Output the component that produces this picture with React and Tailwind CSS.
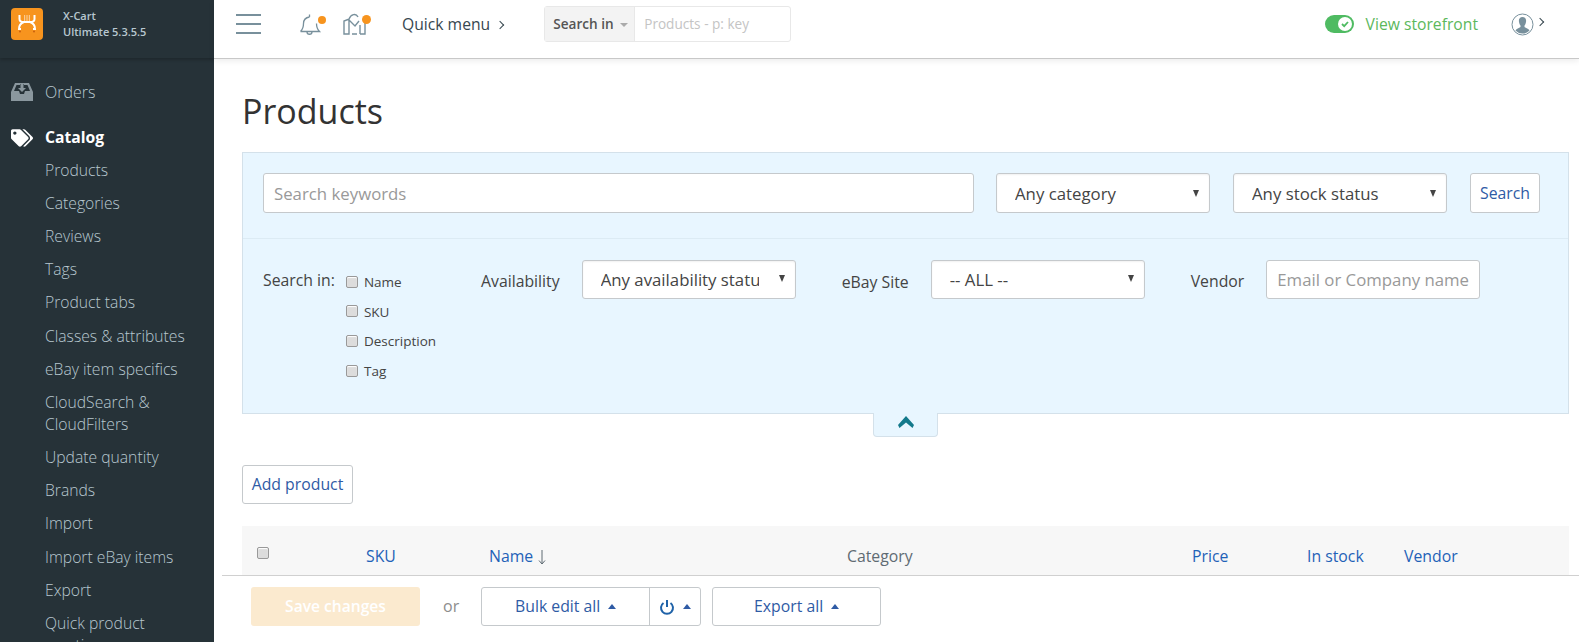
import React from 'react'
import { FaTags } from 'react-icons/fa'

const font = 'font-["Open_Sans",sans-serif]'

const menuItems = [
  'Products',
  'Categories',
  'Reviews',
  'Tags',
  'Product tabs',
  'Classes & attributes',
  'eBay item specifics',
  'CloudSearch & CloudFilters',
  'Update quantity',
  'Brands',
  'Import',
  'Import eBay items',
  'Export',
  'Quick product creation',
]

const Logo = () => (
  <div className="w-8 h-8 rounded-[4px] bg-[#f7941e] flex items-center justify-center shrink-0">
    <svg width="20" height="20" viewBox="0 0 20 20" fill="none">
      <path d="M2.500 1v4c0 2 2 3 4 3h7c2 0 4-1 4-3V1" stroke="#fff" strokeWidth="2" />
      <path d="M7 8c-3 1-5 3-5 7h2M13 8c3 1 5 3 5 7h-2" stroke="#fff" strokeWidth="2" />
      <path d="M7 2h6M7 4h6M7 6h6" stroke="#fff" strokeWidth="1.200" strokeDasharray="1.200 1.200" />
      <circle cx="3" cy="17.500" r="1" fill="#c9600f" />
      <circle cx="17" cy="17.500" r="1" fill="#c9600f" />
    </svg>
  </div>
)

const InboxIcon = () => (
  <svg width="22" height="18" viewBox="0 0 22 18" fill="#8a979e">
    <path d="M4 0h14l4 9v9H0V9zM5.500 2 3 8h5l1 3h4l1-3h5l-2.500-6h-3.500V1H9v1z" fillRule="evenodd" />
    <path d="M9.500 1h3v4h2.500L11 9 7 5h2.500z" />
  </svg>
)

const Sidebar = () => (
  <aside className="w-[214px] shrink-0 h-full bg-[#263238] overflow-hidden">
    <div className="h-[58px] flex items-center pl-[11px] pb-[10px] shadow-[0_2px_3px_rgba(0,0,0,0.2)]">
      <Logo />
      <div className="ml-[20px] text-[11px] leading-[16px] font-semibold text-[#b8c8d0]">
        <div>X-Cart</div>
        <div>Ultimate 5.3.5.5</div>
      </div>
    </div>
    <div className="pt-[22px]">
      <div className="flex items-center h-[24px] text-[16px] font-light text-[#b8c8d0]">
        <div className="w-[45px] pl-[11px]"><InboxIcon /></div>
        Orders
      </div>
      <div className="mt-[22px] flex items-center h-[24px] text-[15.700px] font-bold text-white">
        <div className="w-[45px] pl-[11px]"><FaTags size={22} /></div>
        Catalog
      </div>
      <ul className="mt-[3px] pl-[45px] pr-[20px]">
        {menuItems.map((item) => (
          <li key={item} className="py-[5.600px] text-[15.700px] leading-[22px] text-[#b8c8d0] font-light">{item}</li>
        ))}
      </ul>
    </div>
  </aside>
)

const BellIcon = () => (
  <div className="relative w-[26px] h-[24px]">
    <svg width="24" height="24" viewBox="0 0 24 24" fill="none" stroke="#78909c" strokeWidth="1.300">
      <path d="M1.500 19.500h19c-2-2-3-4.500-3-8M4.500 11.500c0 3-1 6-3 8M4.500 11.500c0-4 3-6 6-6.500M10.500 5V2.500M8 20c0 3 5 3 5 0" />
    </svg>
    <div className="absolute top-[4px] right-[-1px] w-2 h-2 rounded-full bg-[#f7941e]" />
  </div>
)

const StoreIcon = () => (
  <div className="relative w-[28px] h-[24px]">
    <svg width="24" height="24" viewBox="0 0 24 24" fill="none" stroke="#78909c" strokeWidth="1.400">
      <path d="M1 22V9l5-2v15zM6 8l6 6 4-5M6 7c2-5 7-6 9-2M9 22h5M17 22h5V10M17 22v-9" />
    </svg>
    <div className="absolute top-[3px] right-0 w-[9px] h-[9px] rounded-full bg-[#f7941e]" />
  </div>
)

const Header = () => (
  <header className="h-[59px] shrink-0 flex items-center pb-[10px] border-b border-[#c8c8c8] bg-white shadow-[0_2px_6px_rgba(0,0,0,0.08)] z-10">
    <div className="ml-[22px] w-[25px] flex flex-col gap-[7px]">
      <div className="h-[2px] bg-[#78909c]" />
      <div className="h-[2px] bg-[#78909c]" />
      <div className="h-[2px] bg-[#78909c]" />
    </div>
    <div className="ml-[38px]"><BellIcon /></div>
    <div className="ml-[18px]"><StoreIcon /></div>
    <div className="ml-[31px] mt-[2px] flex items-center text-[15.700px] text-[#37474f]">
      Quick menu
      <span className="ml-[7px] w-[6px] h-[6px] border-t border-r border-[#37474f] rotate-45" />
    </div>
    <div className="ml-[41px] flex h-[36px] w-[247px] border border-[#e8e8e8] rounded-[3px] text-[13.600px]">
      <div className="w-[90px] bg-[#f3f3f3] border-r border-[#e8e8e8] flex items-center pl-[8px] pt-[1px] font-semibold text-[#555]">
        Search in
        <span className="ml-[6px] border-x-[4px] border-x-transparent border-t-[4px] border-t-[#aaa]" />
      </div>
      <div className="flex-1 flex items-center pl-[9px] pt-[1px] text-[#c4c4c4]">Products - p: key</div>
    </div>
    <div className="ml-auto flex items-center text-[15.700px] text-[#5cb85c]">
      <div className="w-[29px] h-[18px] rounded-full bg-[#4fbb62] flex items-center justify-end pr-[2px]">
        <div className="w-[14px] h-[14px] rounded-full bg-white flex items-center justify-center">
          <svg width="10" height="10" viewBox="0 0 10 10" fill="none" stroke="#4fbb62" strokeWidth="1.800">
            <path d="M2 5l2.200 2.200L8 3" />
          </svg>
        </div>
      </div>
      <span className="ml-[12px] mt-[2px]">View storefront</span>
    </div>
    <div className="ml-[33px] mr-[36px] flex items-center">
      <svg width="23" height="23" viewBox="0 0 23 23">
        <circle cx="11.500" cy="11.500" r="10.500" fill="#fff" stroke="#78909c" strokeWidth="1" />
        <path d="M11.500 4c-3 0-4 2.500-3.500 5 .2 1.500 1 3 1.500 3.500v1.500c-1.500 1-4 1.500-5 3.500a9.500 9.500 0 0 0 14 0c-1-2-3.500-2.500-5-3.500v-1.500c.5-.5 1.300-2 1.500-3.500.5-2.500-.5-5-3.500-5z" fill="#78909c" />
      </svg>
      <span className="ml-[3px] mb-[4px] w-[6px] h-[6px] border-t border-r border-[#37474f] rotate-45" />
    </div>
  </header>
)

const Select = ({ label, className }) => (
  <div className={`w-[214px] shrink-0 bg-white border border-[#c5c9cc] rounded-[3px] flex items-center justify-between pl-[18px] pr-[8px] text-[16.800px] text-[#444] shadow-[inset_0_1px_2px_rgba(0,0,0,0.06)] ${className}`}>
    <span className="whitespace-nowrap overflow-hidden w-[158px]">{label}</span>
    <span className="border-x-[3.500px] border-x-transparent border-t-[7px] border-t-[#444] mb-[2px] mr-[2px]" />
  </div>
)

const Checkbox = ({ className }) => (
  <span className={`block w-[12px] h-[12px] rounded-[2px] bg-[#dcdcdc] border border-[#999] shadow-[inset_0_1px_1px_#fff] ${className || ''}`} />
)

const SearchPanel = () => (
  <div className="bg-[#e8f6ff] border border-[#d4e1ea] h-[262px] text-[#444]">
    <div className="h-[86px] border-b border-[#dcebf4] pl-[20px] pt-[20px] flex">
      <div className="w-[711px] h-[40px] pt-[2px] bg-white border border-[#c5c9cc] rounded-[3px] flex items-center pl-[10px] text-[16.800px] text-[#999]">Search keywords</div>
      <Select label="Any category" className="h-[40px] pt-[2px] ml-[22px]" />
      <Select label="Any stock status" className="h-[40px] pt-[2px] ml-[23px]" />
      <div className="ml-[23px] w-[70px] h-[40px] pt-[2px] bg-white border border-[#c5c9cc] rounded-[3px] flex items-center justify-center text-[15.800px] text-[#2f5ba5]">Search</div>
    </div>
    <div className="pl-[20px] pt-[21px] flex items-start">
      <span className="text-[15.800px] leading-[39px] mt-[1px] mr-[11px]">Search in:</span>
      <div className="text-[13.500px] mt-[7px]">
        {['Name', 'SKU', 'Description', 'Tag'].map((label) => (
          <div key={label} className="h-[29.600px] flex items-center">
            <Checkbox />
            <span className="ml-[6px] mt-[1px]">{label}</span>
          </div>
        ))}
      </div>
      <span className="ml-[45px] text-[15.800px] leading-[39px] mt-[2px]">Availability</span>
      <Select label="Any availability status" className="h-[39px] ml-[22px]" />
      <span className="ml-[46px] text-[15.800px] leading-[39px] mt-[3px]">eBay Site</span>
      <Select label="-- ALL --" className="h-[39px] ml-[22px]" />
      <span className="ml-[46px] text-[15.800px] leading-[39px] mt-[2px]">Vendor</span>
      <div className="ml-[22px] w-[214px] h-[39px] bg-white border border-[#c5c9cc] rounded-[3px] flex items-center pl-[10px] text-[16.800px] text-[#999] whitespace-nowrap overflow-hidden">Email or Company name</div>
    </div>
  </div>
)

const Caret = () => (
  <span className="ml-[8px] border-x-[4px] border-x-transparent border-b-[5px] border-b-[#2f5ba5]" />
)

const Footer = () => (
  <footer className="h-[67px] shrink-0 ml-[8px] border-t border-[#d0d0d0] bg-white flex items-start pt-[11px] pl-[29px] text-[15.800px]">
    <div className="w-[169px] h-[39px] rounded-[3px] bg-[#fbeacf] text-white font-semibold text-[15.600px] flex items-center justify-center">Save changes</div>
    <span className="ml-[23px] leading-[39px] text-[#8d8d8d] text-[16px]">or</span>
    <div className="ml-[22px] h-[39px] w-[220px] flex border border-[#c5c9cc] rounded-[3px] text-[#2f5ba5]">
      <div className="w-[168px] flex items-center justify-center border-r border-[#c5c9cc]">
        Bulk edit all <Caret />
      </div>
      <div className="flex-1 flex items-center justify-center">
        <svg width="16" height="16" viewBox="0 0 16 16" fill="none" stroke="#1f62a8" strokeWidth="2">
          <path d="M4.500 4a6 6 0 1 0 7 0M8 1v7" />
        </svg>
        <Caret />
      </div>
    </div>
    <div className="ml-[11px] h-[39px] w-[169px] border border-[#c5c9cc] rounded-[3px] text-[#2f5ba5] flex items-center justify-center">
      Export all <Caret />
    </div>
  </footer>
)

const Content = () => (
  <main className="flex-1 min-h-0 overflow-hidden pl-[28px] pr-[10px]">
    <h1 className="pt-[29px] text-[34px] leading-[46px] text-[#333]">Products</h1>
    <div className="mt-[18px]"><SearchPanel /></div>
    <div className="h-[24px] w-[65px] ml-[631px] -mt-[1px] relative bg-[#e8f6ff] border border-t-0 border-[#d4e1ea] rounded-b-[4px] flex items-start justify-center pt-[3px]">
      <svg width="16" height="13" viewBox="0 0 16 13" fill="#13798b">
        <path d="M8 0l8 9-1.500 3L8 6.500 1.500 12 0 9z" />
      </svg>
    </div>
    <div className="mt-[28px] w-[111px] h-[39px] border border-[#c5c9cc] rounded-[3px] flex items-center justify-center text-[15.800px] text-[#2f5ba5]">Add product</div>
    <div className="mt-[22px] h-[60px] bg-[#f7f7f7] flex items-start text-[15.800px] leading-[22px] text-[#1f62b8] pt-[19px]">
      <div className="w-[124px] pl-[15px] pt-[2px]"><Checkbox /></div>
      <span className="w-[123px]">SKU</span>
      <span className="w-[358px] flex items-center">
        Name
        <svg className="ml-[5px] mt-[3px]" width="8" height="15" viewBox="0 0 8 15" fill="none" stroke="#5f6b73" strokeWidth="1">
          <path d="M4 0v14M1 10.500L4 14l3-3.500" />
        </svg>
      </span>
      <span className="w-[345px] text-[#5f6b73]">Category</span>
      <span className="w-[115px]">Price</span>
      <span className="w-[97px]">In stock</span>
      <span>Vendor</span>
    </div>
  </main>
)

export default function App() {
  return (
    <div className={`flex h-[642px] w-full overflow-hidden bg-white ${font}`}>
      <Sidebar />
      <div className="flex-1 min-w-0 flex flex-col">
        <Header />
        <Content />
        <Footer />
      </div>
    </div>
  )
}
